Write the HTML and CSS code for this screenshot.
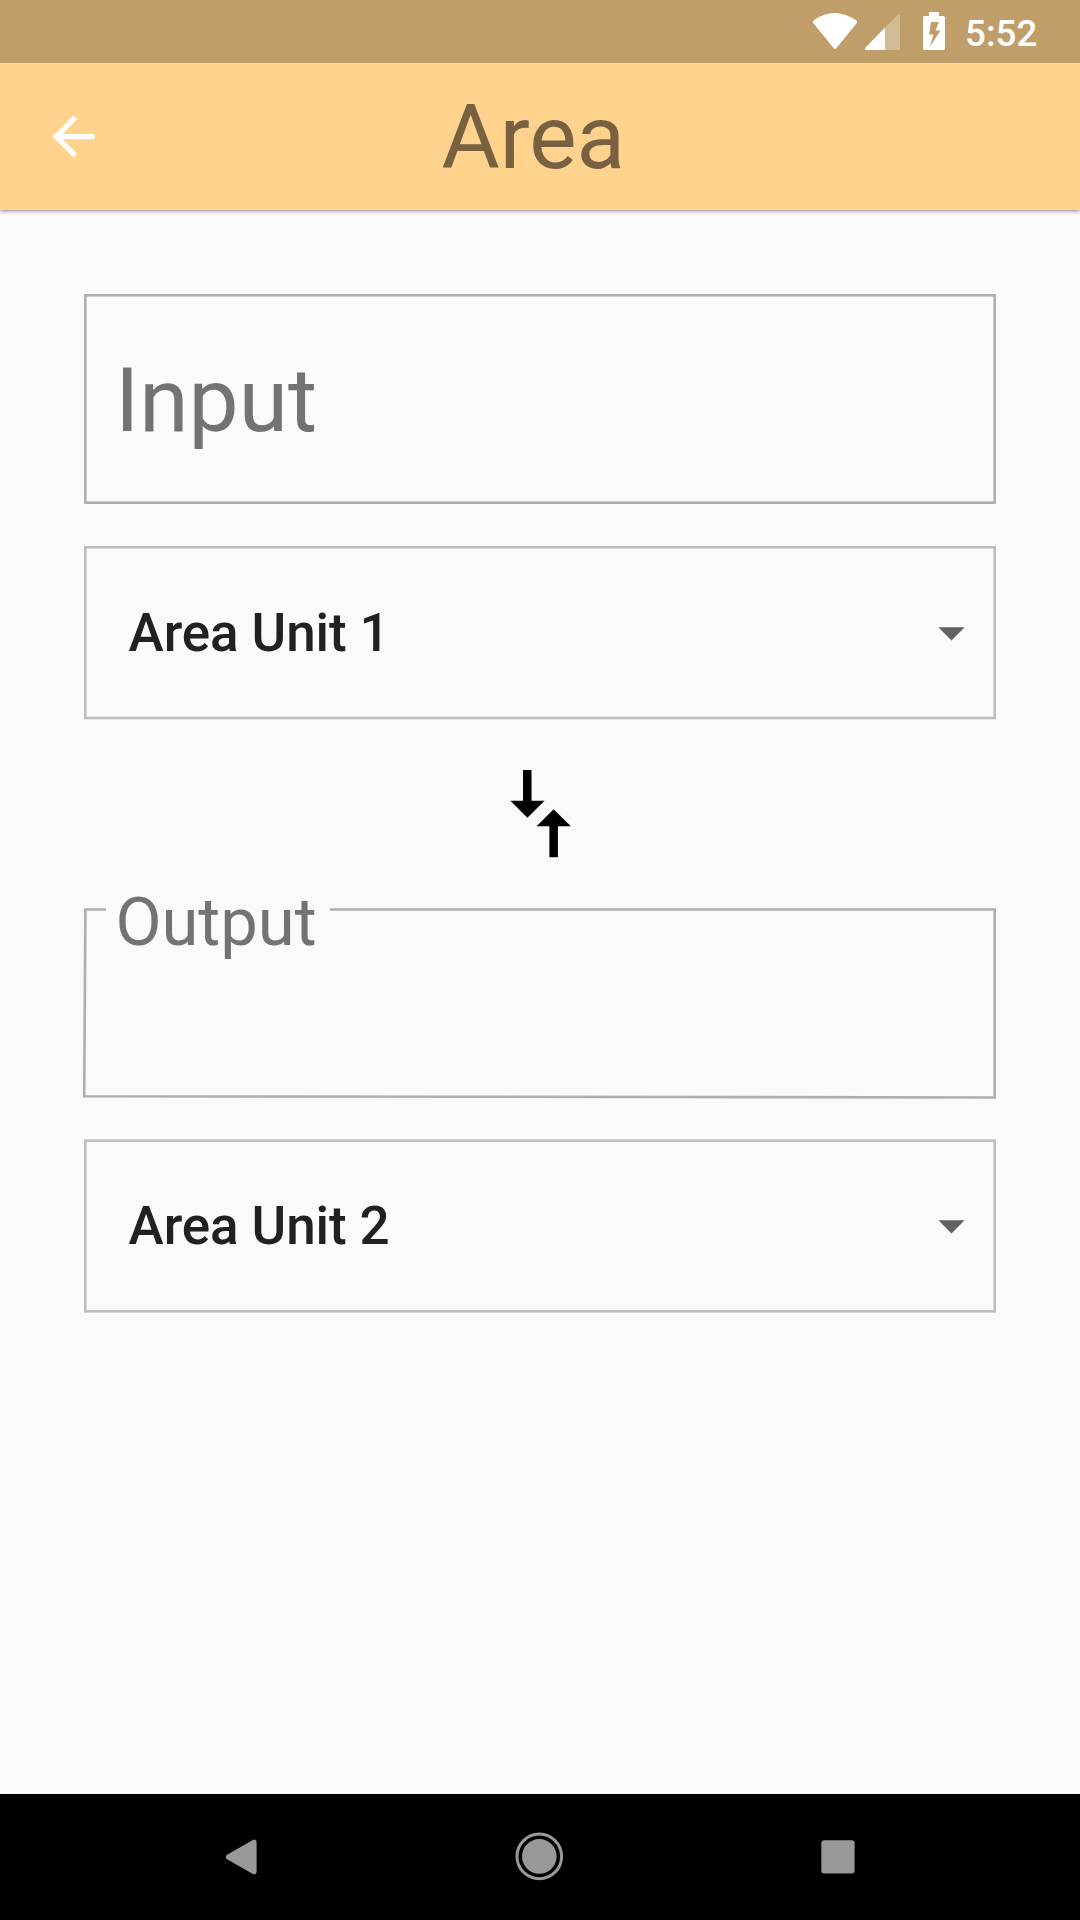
FILE: index.html
```html
<!DOCTYPE html>
<html lang="en">
<head>
<meta charset="utf-8">
<title>Area</title>
<link rel="stylesheet" href="styles.css">
</head>
<body>
<div class="screen">
  <div class="status-bar">
    <svg class="status-icons" width="140" height="63" viewBox="0 0 140 63">
      <path fill="#fff" d="M13.3 20.5Q34 5.500 56.700 20.500Q57.700 21.800 56.800 23L36.500 48Q35 49.800 33.500 48L13.200 23Q12.300 21.800 13.300 20.500Z"/>
      <path fill="#fff" fill-opacity=".3" d="M85 27.500L97.500 15.500Q100 14 100 17V48.500Q100 50 98.500 50H85Z"/>
      <path fill="#fff" d="M85 27.500V50H66.500Q64 50 65.500 47.500Z"/>
      <path fill="#fff" fill-rule="evenodd" d="M129 12H139V16H143.500Q145 16 145 17.500V48.500Q145 50 143.500 50H124.500Q123 50 123 48.500V17.500Q123 16 124.500 16H129ZM131 22L129 34.500H133.500L130 46.500L140.500 30.500H135.500L139 22Z"/>
    </svg>
    <span class="clock">5:52</span>
  </div>
  <header class="app-bar">
    <svg class="back" width="63" height="63" viewBox="0 0 24 24"><path fill="#fff" d="M20 11H7.830l5.590-5.590L12 4l-8 8 8 8 1.410-1.410L7.830 13H20v-2z"/></svg>
    <h1 class="title">Area</h1>
  </header>
  <main class="content">
    <div class="field field-input">
      <svg class="outline" width="912" height="210"><rect x="1.300" y="1.300" width="909.400" height="207.400"/></svg>
      <span class="hint">Input</span>
    </div>
    <div class="field select">
      <svg class="outline outline-light" width="912" height="174"><rect x="1.300" y="1.300" width="909.400" height="170.700"/></svg>
      <span class="value">Area Unit 1</span>
      <svg class="caret" width="63" height="63" viewBox="0 0 24 24"><path d="M7 10l5 5 5-5z"/></svg>
    </div>
    <svg class="swap" width="60" height="88" viewBox="0 0 60 88"><path d="M13 0H21.500V30.800H34.500L17.400 47.700L0.400 30.800H13ZM39.400 87.200H47.900V56.300H60.800L43.600 39.300L26.600 56.300H39.400Z"/></svg>
    <div class="field field-output">
      <svg class="outline" width="912" height="192"><path d="M22 1.500H1.400L.2 188.200L910.700 189.500V1.500H246"/></svg>
      <span class="label">Output</span>
    </div>
    <div class="field select">
      <svg class="outline outline-light" width="912" height="174"><rect x="1.300" y="1.600" width="909.400" height="170.700"/></svg>
      <span class="value">Area Unit 2</span>
      <svg class="caret" width="63" height="63" viewBox="0 0 24 24"><path d="M7 10l5 5 5-5z"/></svg>
    </div>
  </main>
  <nav class="nav-bar">
    <svg width="50" height="50" viewBox="0 0 50 50"><path fill="#999" stroke="#999" stroke-width="5" stroke-linejoin="round" d="M11.300 25L37.100 10.200V39.800Z"/></svg>
    <svg width="50" height="50" viewBox="0 0 50 50"><circle cx="24.300" cy="24.400" r="17.300" fill="#999"/><circle cx="24.300" cy="24.400" r="22.300" fill="none" stroke="#999" stroke-width="3"/></svg>
    <svg width="50" height="50" viewBox="0 0 50 50"><rect x="8.300" y="8.300" width="33.300" height="33.300" rx="3" fill="#999"/></svg>
  </nav>
</div>
</body>
</html>
```
FILE: styles.css
```css
* { box-sizing: border-box; }
body { margin: 0; font-family: Roboto, sans-serif; background: #fafafa; }
svg { display: block; flex: none; overflow: visible; }
.screen { width: 1080px; height: 1920px; display: flex; flex-direction: column; overflow: hidden; }

.status-bar { position: relative; z-index: 1; height: 63px; flex: none; background: #bf9e6a; display: flex; padding-left: 800px; }
.clock { padding-left: 25px; line-height: 68px; font-size: 36.75px; font-weight: 500; color: #fff; }

.app-bar {
  height: 147px; flex: none; background: #ffd28e; display: flex; align-items: center; padding-left: 42px;
  box-shadow: 0 1px 4px rgba(0, 0, 0, .45);
}
.title { margin: 2px 0 0 336.5px; font-size: 89.25px; line-height: 105px; font-weight: 400; color: #776141; }

.content { flex: 1; padding: 84px 84px 0; display: flex; flex-direction: column; }
.field { position: relative; display: flex; flex: none; }
.outline { position: absolute; left: 0; top: 0; fill: none; stroke: #afafaf; stroke-width: 2.6; }
.outline-light { stroke: #bdbdbd; }
.field-input { height: 210px; padding: 54px 0 0 31px; }
.hint { font-size: 89.25px; line-height: 105px; color: #737373; }
.select { height: 173px; margin-top: 42px; padding: 0 13px 0 44.6px; align-items: center; justify-content: space-between; }
.value { font-size: 53px; letter-spacing: -.1px; line-height: 62px; font-weight: 500; color: #212121; }
.caret { fill: #616161; }
.swap { margin: 51px 0 0 426px; }
.field-output { height: 188px; margin-top: 50px; padding-left: 31.4px; }
.label { margin-top: -26px; font-size: 66.94px; line-height: 80px; color: #737373; }
.field-output + .select { margin-top: 43px; }

.nav-bar { height: 126px; flex: none; background: #000; display: flex; align-items: center; justify-content: space-between; padding: 0 217px; }
```
